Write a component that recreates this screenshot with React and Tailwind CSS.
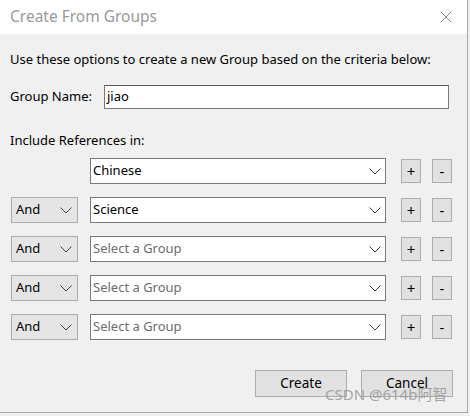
import { X } from 'lucide-react';

const ROWS = [
  { op: null, value: 'Chinese' },
  { op: 'And', value: 'Science' },
  { op: 'And', value: null },
  { op: 'And', value: null },
  { op: 'And', value: null },
];

function Chevron({ className }) {
  return (
    <svg width="12" height="7" viewBox="0 0 12 7" className={className}>
      <path d="M0.5 0.5 L6 6 L11.5 0.5" fill="none" stroke="#404040" strokeWidth="1" />
    </svg>
  );
}

function SmallBtn({ children }) {
  return (
    <button className="w-[20px] h-[24px] flex items-center justify-center border border-[#adadad] bg-[#e1e1e1] text-[15px] leading-none text-black">
      {children}
    </button>
  );
}

export default function App() {
  return (
    <div className="w-[470px] h-[416px] bg-[#f0f0f0] relative overflow-hidden" style={{ fontFamily: '"Noto Sans", "Segoe UI", sans-serif' }}>
      <div className="w-[468px] h-[413px] flex flex-col border-r border-b border-[#a8a8a8]">
        {/* Title bar */}
        <div className="h-[34px] bg-white flex items-center justify-between pl-[10px] pr-[11px]">
          <span className="text-[15.5px] text-[#999999]">Create From Groups</span>
          <X size={20} strokeWidth={1.2} className="text-[#888888]" />
        </div>

        {/* Body */}
        <div className="flex-1 flex flex-col px-[10px] text-[13px] text-black">
          <div className="mt-[16px] h-[18px] leading-[18px]">Use these options to create a new Group based on the criteria below:</div>

          <div className="mt-[17px] grid grid-cols-[94px_1fr] items-center h-[24px] pr-[8px]">
            <span>Group Name:</span>
            <div className="h-[24px] bg-white border border-[#7a7a7a] border-t-[#5a5a5a] flex items-center pl-[2px]">jiao</div>
          </div>

          <div className="mt-[22px] h-[18px] leading-[18px]">Include References in:</div>

          <div className="mt-[9px] flex flex-col gap-[13px]">
            {ROWS.map((r, i) => (
              <div key={i} className="flex items-center h-[26px]">
                <div className="w-[80px] shrink-0 pl-[1px]">
                  {r.op && (
                    <div className="w-[67px] h-[26px] bg-[#e5e5e5] border border-[#adadad] flex items-center justify-between pl-[4px] pr-[5px]">
                      <span>{r.op}</span>
                      <Chevron />
                    </div>
                  )}
                </div>
                <div className="w-[296px] shrink-0 h-[26px] bg-white border border-[#7a7a7a] flex items-center justify-between pl-[2px] pr-[4px]">
                  <span className={r.value ? 'text-black' : 'text-[#6d6d6d]'}>{r.value || 'Select a Group'}</span>
                  <Chevron />
                </div>
                <div className="ml-[15px] flex gap-[11px]">
                  <SmallBtn>+</SmallBtn>
                  <SmallBtn>-</SmallBtn>
                </div>
              </div>
            ))}
          </div>

          <div className="mt-auto mb-[15px] flex justify-end gap-[14px] pr-[4px]">
            <button className="w-[92px] h-[27px] bg-[#e1e1e1] border border-[#adadad] text-[13.5px]">Create</button>
            <button className="w-[92px] h-[27px] bg-[#e1e1e1] border border-[#adadad] text-[13.5px]">Cancel</button>
          </div>
        </div>
      </div>

      {/* Watermark */}
      <div className="absolute left-[325px] top-[383px] text-[15px] text-[#9a9a9a]/90 whitespace-nowrap" style={{ fontFamily: '"Noto Sans", "Noto Sans CJK SC", sans-serif' }}>
        CSDN @614b阿智
      </div>
    </div>
  );
}
